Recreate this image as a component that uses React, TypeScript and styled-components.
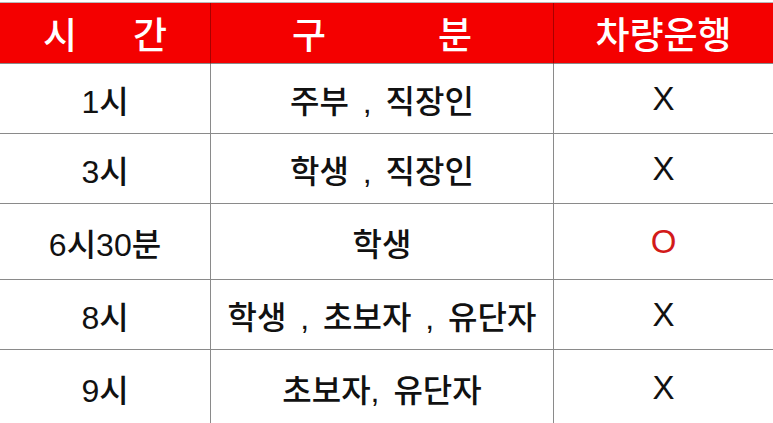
import React from 'react';
import styled, { createGlobalStyle } from 'styled-components';

const GlobalStyle = createGlobalStyle`
  html, body {
    margin: 0;
    padding: 0;
    background: #fff;
  }
  body {
    font-family: "Liberation Sans", "Noto Sans CJK KR", sans-serif;
  }
`;

const Wrapper = styled.div`
  width: 773px;
  height: 423px;
  overflow: hidden;
  padding-top: 2px;
  box-sizing: border-box;
  background: #fff;
`;

const Table = styled.div`
  display: grid;
  grid-template-columns: 211px 343px 1fr;
  border-top: 1px solid #b9b9b9;
`;

const HeadCell = styled.div<{ last?: boolean }>`
  height: 60px;
  background: #f40000;
  color: #fff;
  display: flex;
  align-items: center;
  justify-content: center;
  font-size: 37px;
  font-weight: 500;
  border-right: ${(p) => (p.last ? 'none' : '1px solid #a80000')};
  border-bottom: 1px solid #8a8a8a;
`;

const Spread = styled.span<{ gap: number }>`
  display: flex;
  gap: ${(p) => p.gap}px;
`;

const Cell = styled.div<{ h: number; last?: boolean; red?: boolean }>`
  height: ${(p) => p.h}px;
  display: flex;
  align-items: center;
  justify-content: center;
  font-size: 32px;
  font-weight: 500;
  color: ${(p) => (p.red ? '#d21a1a' : '#111')};
  border-right: ${(p) => (p.last ? 'none' : '1px solid #8a8a8a')};
  border-bottom: 1px solid #8a8a8a;
  word-spacing: 5px;
`;

const Mark = styled.span`
  font-weight: 400;
  font-size: 33px;
`;

const rows = [
  { time: '1시', who: '주부 , 직장인', car: 'X', h: 69 },
  { time: '3시', who: '학생 , 직장인', car: 'X', h: 69 },
  { time: '6시30분', who: '학생', car: 'O', h: 75 },
  { time: '8시', who: '학생 , 초보자 , 유단자', car: 'X', h: 69 },
  { time: '9시', who: '초보자, 유단자', car: 'X', h: 75 },
];

export default function App() {
  return (
    <Wrapper>
      <GlobalStyle />
      <Table>
        <HeadCell>
          <Spread gap={56}>
            <span>시</span>
            <span>간</span>
          </Spread>
        </HeadCell>
        <HeadCell>
          <Spread gap={112}>
            <span>구</span>
            <span>분</span>
          </Spread>
        </HeadCell>
        <HeadCell last>차량운행</HeadCell>
        {rows.map((r) => (
          <React.Fragment key={r.time}>
            <Cell h={r.h}>{r.time}</Cell>
            <Cell h={r.h}>{r.who}</Cell>
            <Cell h={r.h} last red={r.car === 'O'}>
              <Mark>{r.car}</Mark>
            </Cell>
          </React.Fragment>
        ))}
      </Table>
    </Wrapper>
  );
}
